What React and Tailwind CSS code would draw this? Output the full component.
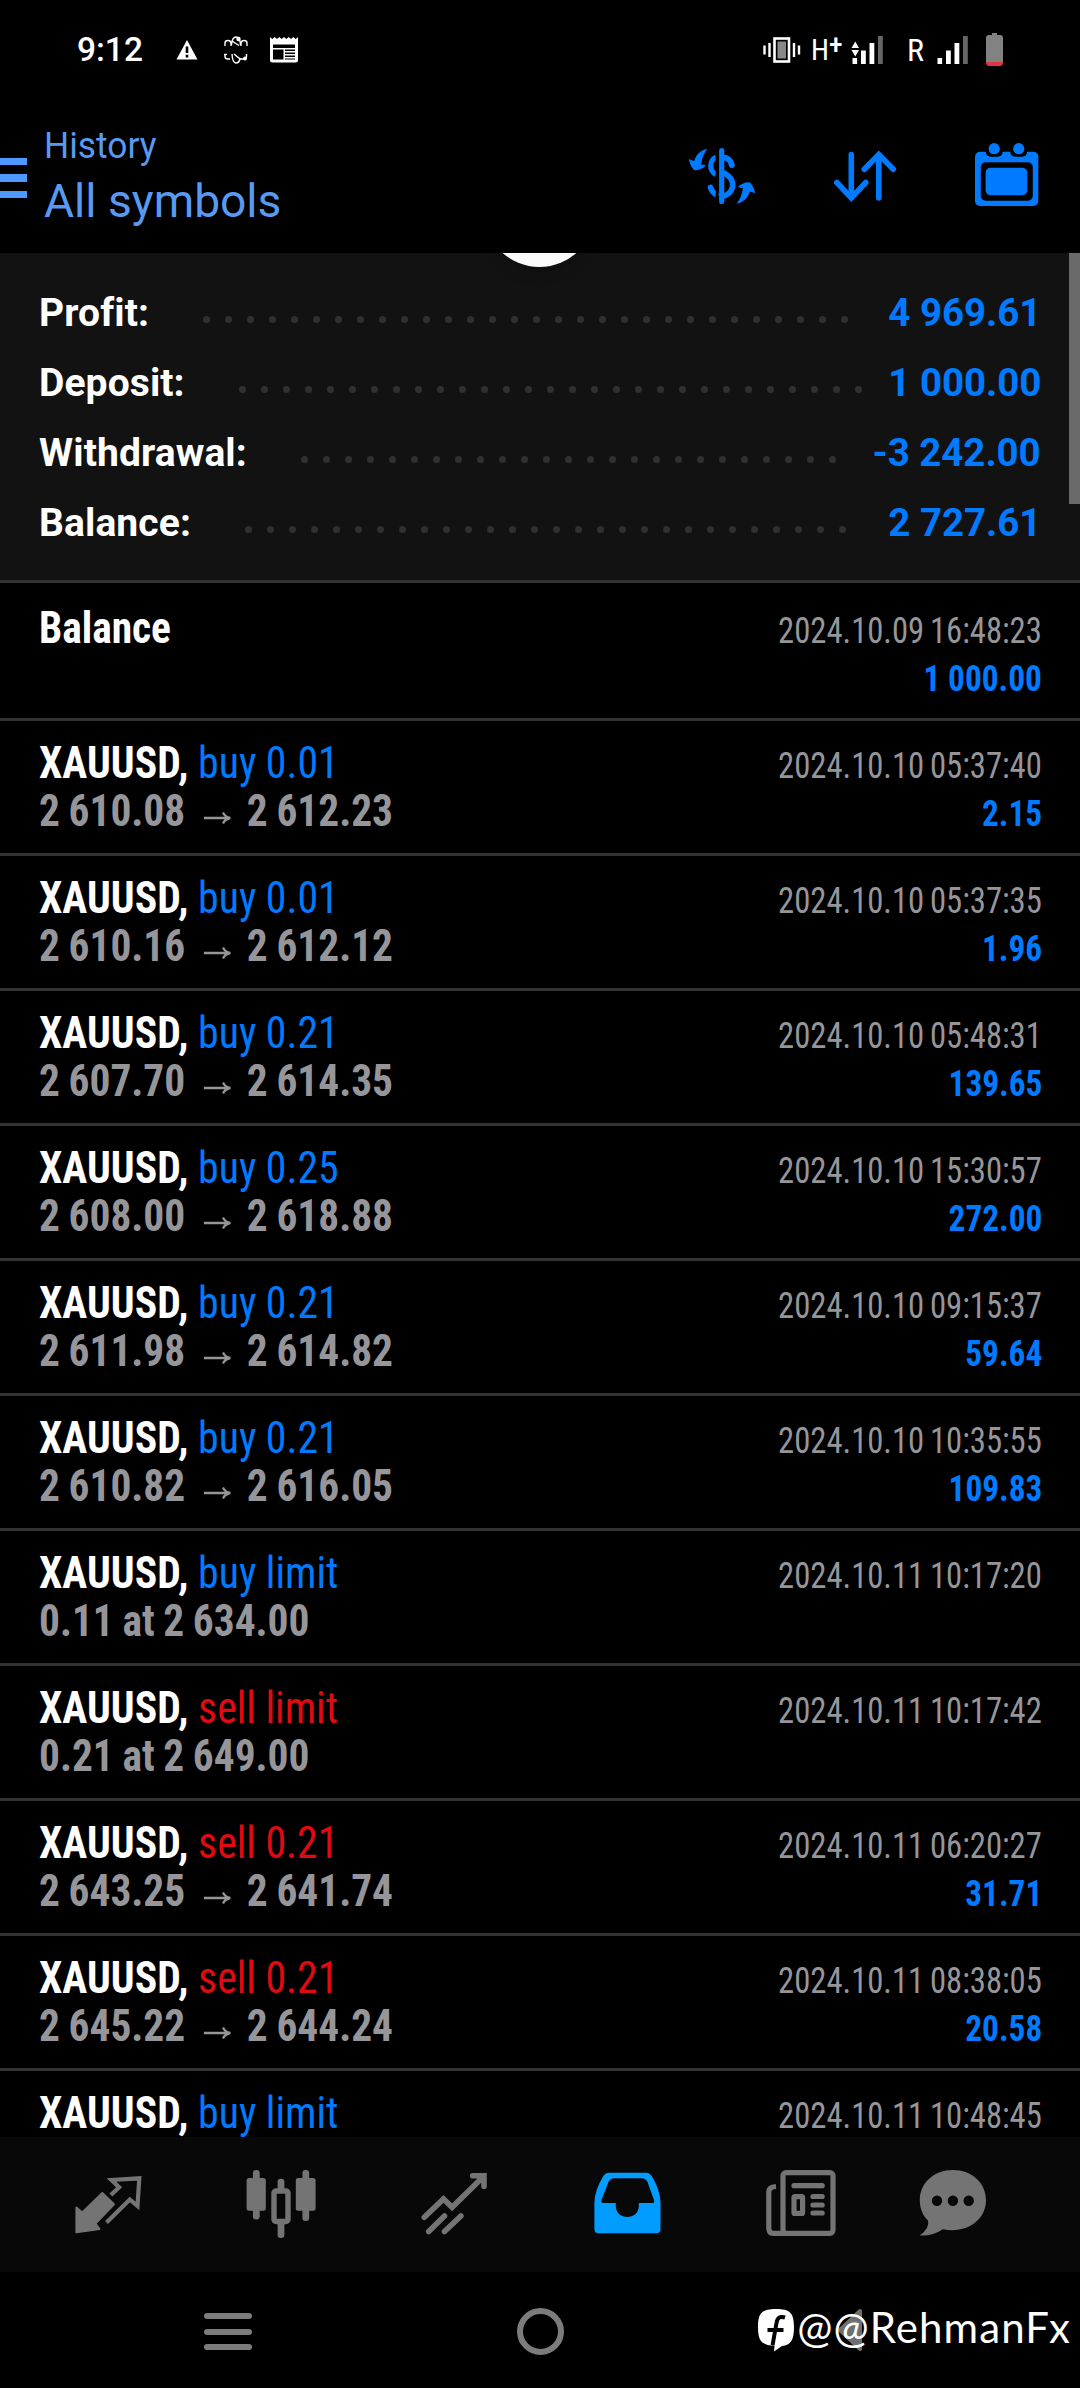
import clsx from "clsx";

const summary = [
  { label: "Profit:", value: "4 969.61", dots: 30 },
  { label: "Deposit:", value: "1 000.00", dots: 29 },
  { label: "Withdrawal:", value: "-3 242.00", dots: 25 },
  { label: "Balance:", value: "2 727.61", dots: 28 },
];

const deals = [
  { id: 1, side: "buy", action: "buy 0.01", from: "2 610.08", to: "2 612.23", time: "2024.10.10 05:37:40", profit: "2.15" },
  { id: 2, side: "buy", action: "buy 0.01", from: "2 610.16", to: "2 612.12", time: "2024.10.10 05:37:35", profit: "1.96" },
  { id: 3, side: "buy", action: "buy 0.21", from: "2 607.70", to: "2 614.35", time: "2024.10.10 05:48:31", profit: "139.65" },
  { id: 4, side: "buy", action: "buy 0.25", from: "2 608.00", to: "2 618.88", time: "2024.10.10 15:30:57", profit: "272.00" },
  { id: 5, side: "buy", action: "buy 0.21", from: "2 611.98", to: "2 614.82", time: "2024.10.10 09:15:37", profit: "59.64" },
  { id: 6, side: "buy", action: "buy 0.21", from: "2 610.82", to: "2 616.05", time: "2024.10.10 10:35:55", profit: "109.83" },
  { id: 7, side: "buy", action: "buy limit", order: "0.11 at 2 634.00", time: "2024.10.11 10:17:20" },
  { id: 8, side: "sell", action: "sell limit", order: "0.21 at 2 649.00", time: "2024.10.11 10:17:42" },
  { id: 9, side: "sell", action: "sell 0.21", from: "2 643.25", to: "2 641.74", time: "2024.10.11 06:20:27", profit: "31.71" },
  { id: 10, side: "sell", action: "sell 0.21", from: "2 645.22", to: "2 644.24", time: "2024.10.11 08:38:05", profit: "20.58" },
  { id: 11, side: "buy", action: "buy limit", time: "2024.10.11 10:48:45" },
];

function Signal({ data }) {
  return (
    <svg width="34" height="30" viewBox="0 0 34 30" className="shrink-0">
      {data && <path d="M0.5 13 L4.3 6.5 L8 13 Z M0.5 15 L4.3 21.5 L8 15 Z" fill="#fff" />}
      <rect x="1.5" y="23" width="4.6" height="6" fill="#fff" />
      <rect x="10" y="15.5" width="4.8" height="13.5" fill="#fff" />
      <rect x="18.5" y="8" width="4.8" height="21" fill="#fff" />
      <rect x="27" y="1" width="4.8" height="28" fill="#666" />
    </svg>
  );
}

function StatusBar() {
  return (
    <div className="flex h-[99px] items-center pl-[77px] pr-[77px]">
      <span className="mt-[2px] w-[99px] text-[33.5px] font-medium">9:12</span>
      <svg width="22" height="20" viewBox="0 0 22 20" className="shrink-0">
        <path d="M11 0 L21.5 19.5 H0.5 Z" fill="#fff" />
        <path d="M11 6.5 V13 M11 14.7 V17.5" stroke="#000" strokeWidth="2.6" />
      </svg>
      <svg width="24" height="28" viewBox="0 0 24 28" className="ml-[26px] shrink-0" fill="none" stroke="#fff" strokeWidth="1.4">
        <path d="M1 10 V7 Q1 4.5 4 4.5 Q7 4.5 7 8 V10 M7.5 9 Q8 1 12 1 Q16 1 16.5 9 M8 5 L15 9.5 M17 10 V8 Q17 4.5 20 4.5 Q23 4.5 23 7 V10" />
        <path d="M1 18 V20.5 Q1 23 4 23 H6 M8 18 Q8.5 27 12 27 Q15 27 16 23 M10 18 L15.5 22.5 Q22 24.5 22.5 21 V18" />
        <circle cx="14.5" cy="3" r="1.5" fill="#fff" />
        <circle cx="21" cy="22.5" r="1.3" fill="#fff" />
        <path d="M0 18.5 H3" />
      </svg>
      <svg width="28" height="26" viewBox="0 0 28 26" className="ml-[22px] shrink-0">
        <path d="M0 0 L2.3 2 L4.7 0 L7 2 L9.3 0 L11.7 2 L14 0 L16.3 2 L18.7 0 L21 2 L23.3 0 L25.7 2 L28 0 V23 Q28 25.5 25.5 25.5 H2.5 Q0 25.5 0 23 Z" fill="#fff" />
        <path d="M3 7.5 H25 V11 H3 Z M3 12.5 H13.5 V22.5 H3 Z M15 12.5 H25 V14 H15 Z M15 15.5 H25 V17 H15 Z M15 18.5 H25 V20 H15 Z M15 21.5 H25 V22.5 H15 Z" fill="#000" />
      </svg>

      <div className="ml-auto flex items-center">
        <svg width="38" height="26" viewBox="0 0 38 26">
          <rect x="11.5" y="1.5" width="14.5" height="23" fill="#000" stroke="#fff" strokeWidth="2.6" />
          <rect x="14.5" y="4.5" width="8.5" height="17" fill="#888" />
          <path d="M1.5 8.5 V17.5 M6.5 6 V20 M31 6 V20 M36 8.5 V17.5" stroke="#fff" strokeWidth="2.4" />
        </svg>
        <span className="ml-2.5 flex w-[40px] items-start font-['Roboto_Condensed'] text-[29px] leading-[34px]">
          H<span className="-mt-[5px] text-[28px] font-medium">+</span>
        </span>
        <Signal data />
        <span className="ml-[22px] w-[29px] font-['Roboto_Condensed'] text-[32px]">R</span>
        <Signal />
        <svg width="17" height="33" viewBox="0 0 17 33" className="ml-[16px]">
          <path d="M6 0 H11 V2 H14 Q17 2 17 5 V29 H0 V5 Q0 2 3 2 H6 Z" fill="#828282" />
          <path d="M0 29 H17 Q17 33 14 33 H3 Q0 33 0 29 Z" fill="#e0353f" />
        </svg>
      </div>
    </div>
  );
}

function SwapArrow({ transform }) {
  return (
    <path
      transform={transform}
      d="M23.3 11 C16 12 12 17 10.3 23 Q7.5 22.5 5 21 Q5.5 27 10 32 Q16 33 22 27.5 Q19.5 26.5 17 26.5 C18 20 20 15 23.3 11 Z"
    />
  );
}

function Header() {
  return (
    <header className="flex h-[154px] items-start pt-[2px] text-[#5899f2]">
      <div className="mt-[57px] flex w-[27px] flex-col gap-[9px]">
        <div className="h-[7px] bg-[#4d99ff]" />
        <div className="h-[8px] bg-[#4d99ff]" />
        <div className="h-[7px] bg-[#4d99ff]" />
      </div>
      <div className="ml-[17px] mt-[20px] origin-left scale-x-[0.982]">
        <div className="text-[36px] leading-[50px]">History</div>
        <div className="text-[47px] leading-[60px]">All symbols</div>
      </div>
      <div className="ml-auto mt-[37px] flex pr-9">
        <svg width="76" height="76" viewBox="0 0 76 76" fill="#007aff">
          <SwapArrow />
          <SwapArrow transform="rotate(180 38 38.2)" />
          <g fill="none" stroke="#007aff">
            <path d="M37.7 12.5 V63.5" strokeWidth="5.2" strokeLinecap="round" />
            <path d="M32 19 C25.5 22.5 24.5 32.5 32 36.5" strokeWidth="5.2" />
            <path d="M39 19.5 C43.5 19.5 47 22.5 47.8 27" strokeWidth="6" strokeLinecap="round" />
            <path d="M38 34 C46 37.5 49.5 43 48.5 49 Q47 56.5 38 58.5" strokeWidth="5.6" />
            <path d="M26.5 49.5 Q28 54 32 56.5" strokeWidth="5.6" strokeLinecap="round" />
          </g>
          <path d="M33 10 V66" stroke="#000" strokeWidth="2.6" />
        </svg>
        <svg width="76" height="76" viewBox="0 0 76 76" className="ml-[67px]" fill="none" stroke="#007aff" strokeWidth="5.6" strokeLinecap="round">
          <path d="M24.3 16.5 V60 M9.8 44.5 L24.3 60 L38.8 44.5" />
          <path d="M51.8 60 V16.5 M37.3 31.3 L51.8 16.5 L66.3 31.3" />
        </svg>
        <svg width="76" height="76" viewBox="0 0 76 76" className="ml-[65px]" fill="#007aff">
          <rect x="7" y="13.7" width="63.3" height="54.3" rx="5" />
          <rect x="12.8" y="24.3" width="52" height="38.4" rx="5" fill="#000" />
          <rect x="17.6" y="29.7" width="41.7" height="27.6" rx="5" />
          <rect x="17.7" y="5" width="17" height="13.7" rx="5" fill="#000" />
          <rect x="42.2" y="5" width="17" height="13.7" rx="5" fill="#000" />
          <circle cx="26.2" cy="10.7" r="5.6" />
          <circle cx="50.7" cy="10.7" r="5.6" />
        </svg>
      </div>
    </header>
  );
}

function Summary() {
  return (
    <section className="relative h-[330px] overflow-hidden border-b-[3px] border-[#333] bg-[#121212] pl-[39px] pr-[39px] pt-[25px]">
      {/* pull-to-refresh bubble sliding under the header */}
      <div className="absolute -top-[97px] left-[484px] h-[111px] w-[111px] rounded-full bg-[#fafafa] shadow-lg" />
      <div className="absolute right-0 top-0 h-[251px] w-[11px] bg-[#6a6a6a]" />
      {summary.map((row) => (
        <div key={row.label} className="flex h-[70px] items-center text-[39px] font-bold leading-[70px]">
          <span className="tracking-[0.1px]">{row.label}</span>
          <div className="ml-[54px] mt-[13px] flex gap-[15px]">
            {Array.from({ length: row.dots }, (_, i) => (
              <span key={i} className="h-[7px] w-[7px] rounded-full bg-[#303030]" />
            ))}
          </div>
          <span className="ml-auto origin-right scale-x-[0.985] text-[#007aff]">{row.value}</span>
        </div>
      ))}
    </section>
  );
}

function DealRow({ deal }) {
  return (
    <div className="h-[135px] border-b-[3px] border-[#333] pl-[39px] pr-[38px] pt-[18px] last:h-[66px] last:border-b-0">
      <div className="flex h-12 items-baseline justify-between text-[45px] leading-12">
        <div className="origin-left scale-x-[0.928]">
          <span className="font-bold">XAUUSD,</span>{" "}
          <span className={clsx(deal.side === "buy" ? "text-[#007aff]" : "text-[#e00a12]")}>{deal.action}</span>
        </div>
        <span className="origin-right scale-x-[0.907] text-[36px] text-[#96969a] [word-spacing:-2px]">{deal.time}</span>
      </div>
      {(deal.order || deal.from) && (
        <div className="flex h-12 items-baseline justify-between text-[45px] font-bold leading-12">
          <div className="flex origin-left scale-x-[0.92] items-baseline text-[#96969a] [word-spacing:-1px]">
            {deal.order}
            {deal.from && (
              <>
                {deal.from}
                <svg width="30" height="14" viewBox="0 0 30 14" className="ml-[20px] mr-[17px]" fill="none" stroke="#96969a" strokeWidth="2.4">
                  <path d="M0 6 H28 M21 0.5 Q23 5 29 6 Q23 7 21 11.5" />
                </svg>
                {deal.to}
              </>
            )}
          </div>
          <span className="origin-right scale-x-[0.925] text-[36px] text-[#007aff]">{deal.profit}</span>
        </div>
      )}
    </div>
  );
}

function TabBar() {
  return (
    <nav className="flex h-[135px] shrink-0 items-center gap-[101px] bg-[#080808] pb-[2px] pl-[72px] text-[#747474]">
      <svg width="72" height="72" viewBox="0 0 72 72" className="shrink-0">
        <path d="M4.4 39.5 L10.3 44.5 L30.3 25 L42 36.3 L23.5 55.5 L27.5 61 L4.4 64.3 Z" fill="currentColor" stroke="currentColor" strokeWidth="2" strokeLinejoin="round" />
        <path d="M38.9 27 L47.1 19.3 L39.5 12 L67.3 10.3 L65.5 38 L57.8 31.5 L34.5 54.5" fill="none" stroke="currentColor" strokeWidth="4.2" />
      </svg>
      <svg width="72" height="72" viewBox="0 0 72 72" className="shrink-0" fill="currentColor">
        <rect x="1.6" y="10" width="19.2" height="32.7" rx="2.5" />
        <rect x="7.9" y="2" width="6.8" height="49.5" rx="3" />
        <rect x="50.8" y="10" width="19.8" height="32.7" rx="2.5" />
        <rect x="57.4" y="2" width="6.8" height="51" rx="3" />
        <rect x="32.6" y="10.7" width="6.8" height="13" rx="3" />
        <rect x="32.6" y="53" width="6.8" height="17" rx="3" />
        <rect x="29" y="23" width="14" height="30.5" rx="2" fill="none" stroke="currentColor" strokeWidth="5.4" />
      </svg>
      <svg width="72" height="72" viewBox="0 0 72 72" className="shrink-0" fill="none" stroke="currentColor" strokeWidth="5.6" strokeLinecap="round">
        <path d="M6.3 49.3 L25.5 31 L34.1 39.3 L65.5 8.5 M54.7 7.7 H66 V18.5" />
        <path d="M26.5 48 L10.7 63.5 M42.9 48 L26.5 63.5" />
      </svg>
      <svg width="72" height="72" viewBox="0 0 72 72" className="shrink-0">
        <path
          d="M18 4.7 H55 Q59 4.7 61 8.5 Q69.5 23 69.5 35 V61 Q69.5 65.3 65.3 65.3 H7.5 Q3.4 65.3 3.4 61 V35 Q3.4 23 12 8.5 Q14 4.7 18 4.7 Z M23 10.3 Q19.5 10.3 17.5 14 L10.5 32 Q9.7 35 12 35 H24.8 V38.5 C25.5 52.5 47 52.5 47.8 38.5 V35 H61.5 Q64 35 63 32 L56.5 14 Q54.5 10.3 51 10.3 Z"
          fill="#009cff"
          fillRule="evenodd"
        />
      </svg>
      <svg width="72" height="72" viewBox="0 0 72 72" className="shrink-0" fill="none" stroke="currentColor" strokeWidth="5.2">
        <rect x="19" y="4.6" width="50" height="60.7" rx="3" />
        <path d="M12 18.5 Q4.8 19 4.8 24 V60 Q4.8 65.3 9 65.3 H22" />
        <path d="M30 17.7 H58.2 M49 28.5 H58.2 M49 37 H58.2 M49 45 H58.2" strokeLinecap="round" />
        <rect x="30" y="28.6" width="8.6" height="16.8" rx="1" />
      </svg>
      <svg width="72" height="72" viewBox="0 0 72 72" className="-ml-[20px] shrink-0">
        <path d="M35.9 2 C55 2 69 15 69 32.3 C69 52 50 66 25.9 61.3 Q15 68.5 2.8 67.5 Q13 60 11 52.5 C5.5 47.5 2.8 40 2.8 32.3 C2.8 15 17 2 35.9 2 Z" fill="currentColor" />
        <circle cx="20" cy="32.7" r="5.2" fill="#080808" />
        <circle cx="35.9" cy="32.7" r="5.2" fill="#080808" />
        <circle cx="51.7" cy="32.7" r="5.2" fill="#080808" />
      </svg>
    </nav>
  );
}

function SystemNav() {
  return (
    <div className="relative flex h-[116px] shrink-0 items-center bg-black pl-[204px]">
      <div className="mt-[3px] flex w-[48px] flex-col gap-[9.5px]">
        <div className="h-[6px] rounded-full bg-[#7c7c7c]" />
        <div className="h-[6px] rounded-full bg-[#7c7c7c]" />
        <div className="h-[6px] rounded-full bg-[#7c7c7c]" />
      </div>
      <div className="ml-[265px] mt-[2px] h-[47px] w-[47px] rounded-full border-[6px] border-[#7c7c7c]" />
      <svg width="27" height="44" viewBox="0 0 27 44" className="ml-[273px]">
        <path d="M23 3 L3 22 L23 41 Z" fill="#6f6f6f" stroke="#6f6f6f" strokeWidth="4" strokeLinejoin="round" />
      </svg>
      <div className="absolute right-[9px] top-[26px] flex items-center">
        <svg width="38" height="44" viewBox="0 0 38 44" className="mr-[2px] mt-[6px]">
          <path d="M19 1 C33 1 37 5 37 19 C37 32 34 37 25 38 L17 43.5 L17.5 38 C4 37.5 1 32 1 19 C1 5 5 1 19 1 Z" fill="#fff" />
          <path d="M28 9.5 Q20.5 7 19.5 15 L15.5 37.5 M10.5 22 H26.5" fill="none" stroke="#000" strokeWidth="4" />
        </svg>
        <span className="font-['Lato'] text-[42px] leading-[58px] tracking-[1.1px]">@@RehmanFx</span>
      </div>
    </div>
  );
}

export default function App() {
  return (
    <div className="flex h-[2388px] w-[1080px] flex-col overflow-hidden bg-black font-['Roboto',sans-serif] text-white">
      <StatusBar />
      <Header />
      <Summary />
      <main className="h-[1554px] shrink-0 font-['Roboto_Condensed',sans-serif]">
        <div className="h-[138px] border-b-[3px] border-[#333] pl-[39px] pr-[38px] pt-[21px]">
          <div className="flex h-12 items-baseline justify-between text-[45px] leading-12">
            <span className="origin-left scale-x-[0.92] font-bold">Balance</span>
            <span className="origin-right scale-x-[0.907] text-[36px] text-[#96969a] [word-spacing:-2px]">2024.10.09 16:48:23</span>
          </div>
          <div className="flex h-12 items-baseline justify-end pt-[3px] text-[45px] font-bold leading-12">
            <span className="origin-right scale-x-[0.925] text-[36px] text-[#007aff]">1 000.00</span>
          </div>
        </div>
        {deals.map((deal) => (
          <DealRow key={deal.id} deal={deal} />
        ))}
      </main>
      <TabBar />
      <SystemNav />
    </div>
  );
}
